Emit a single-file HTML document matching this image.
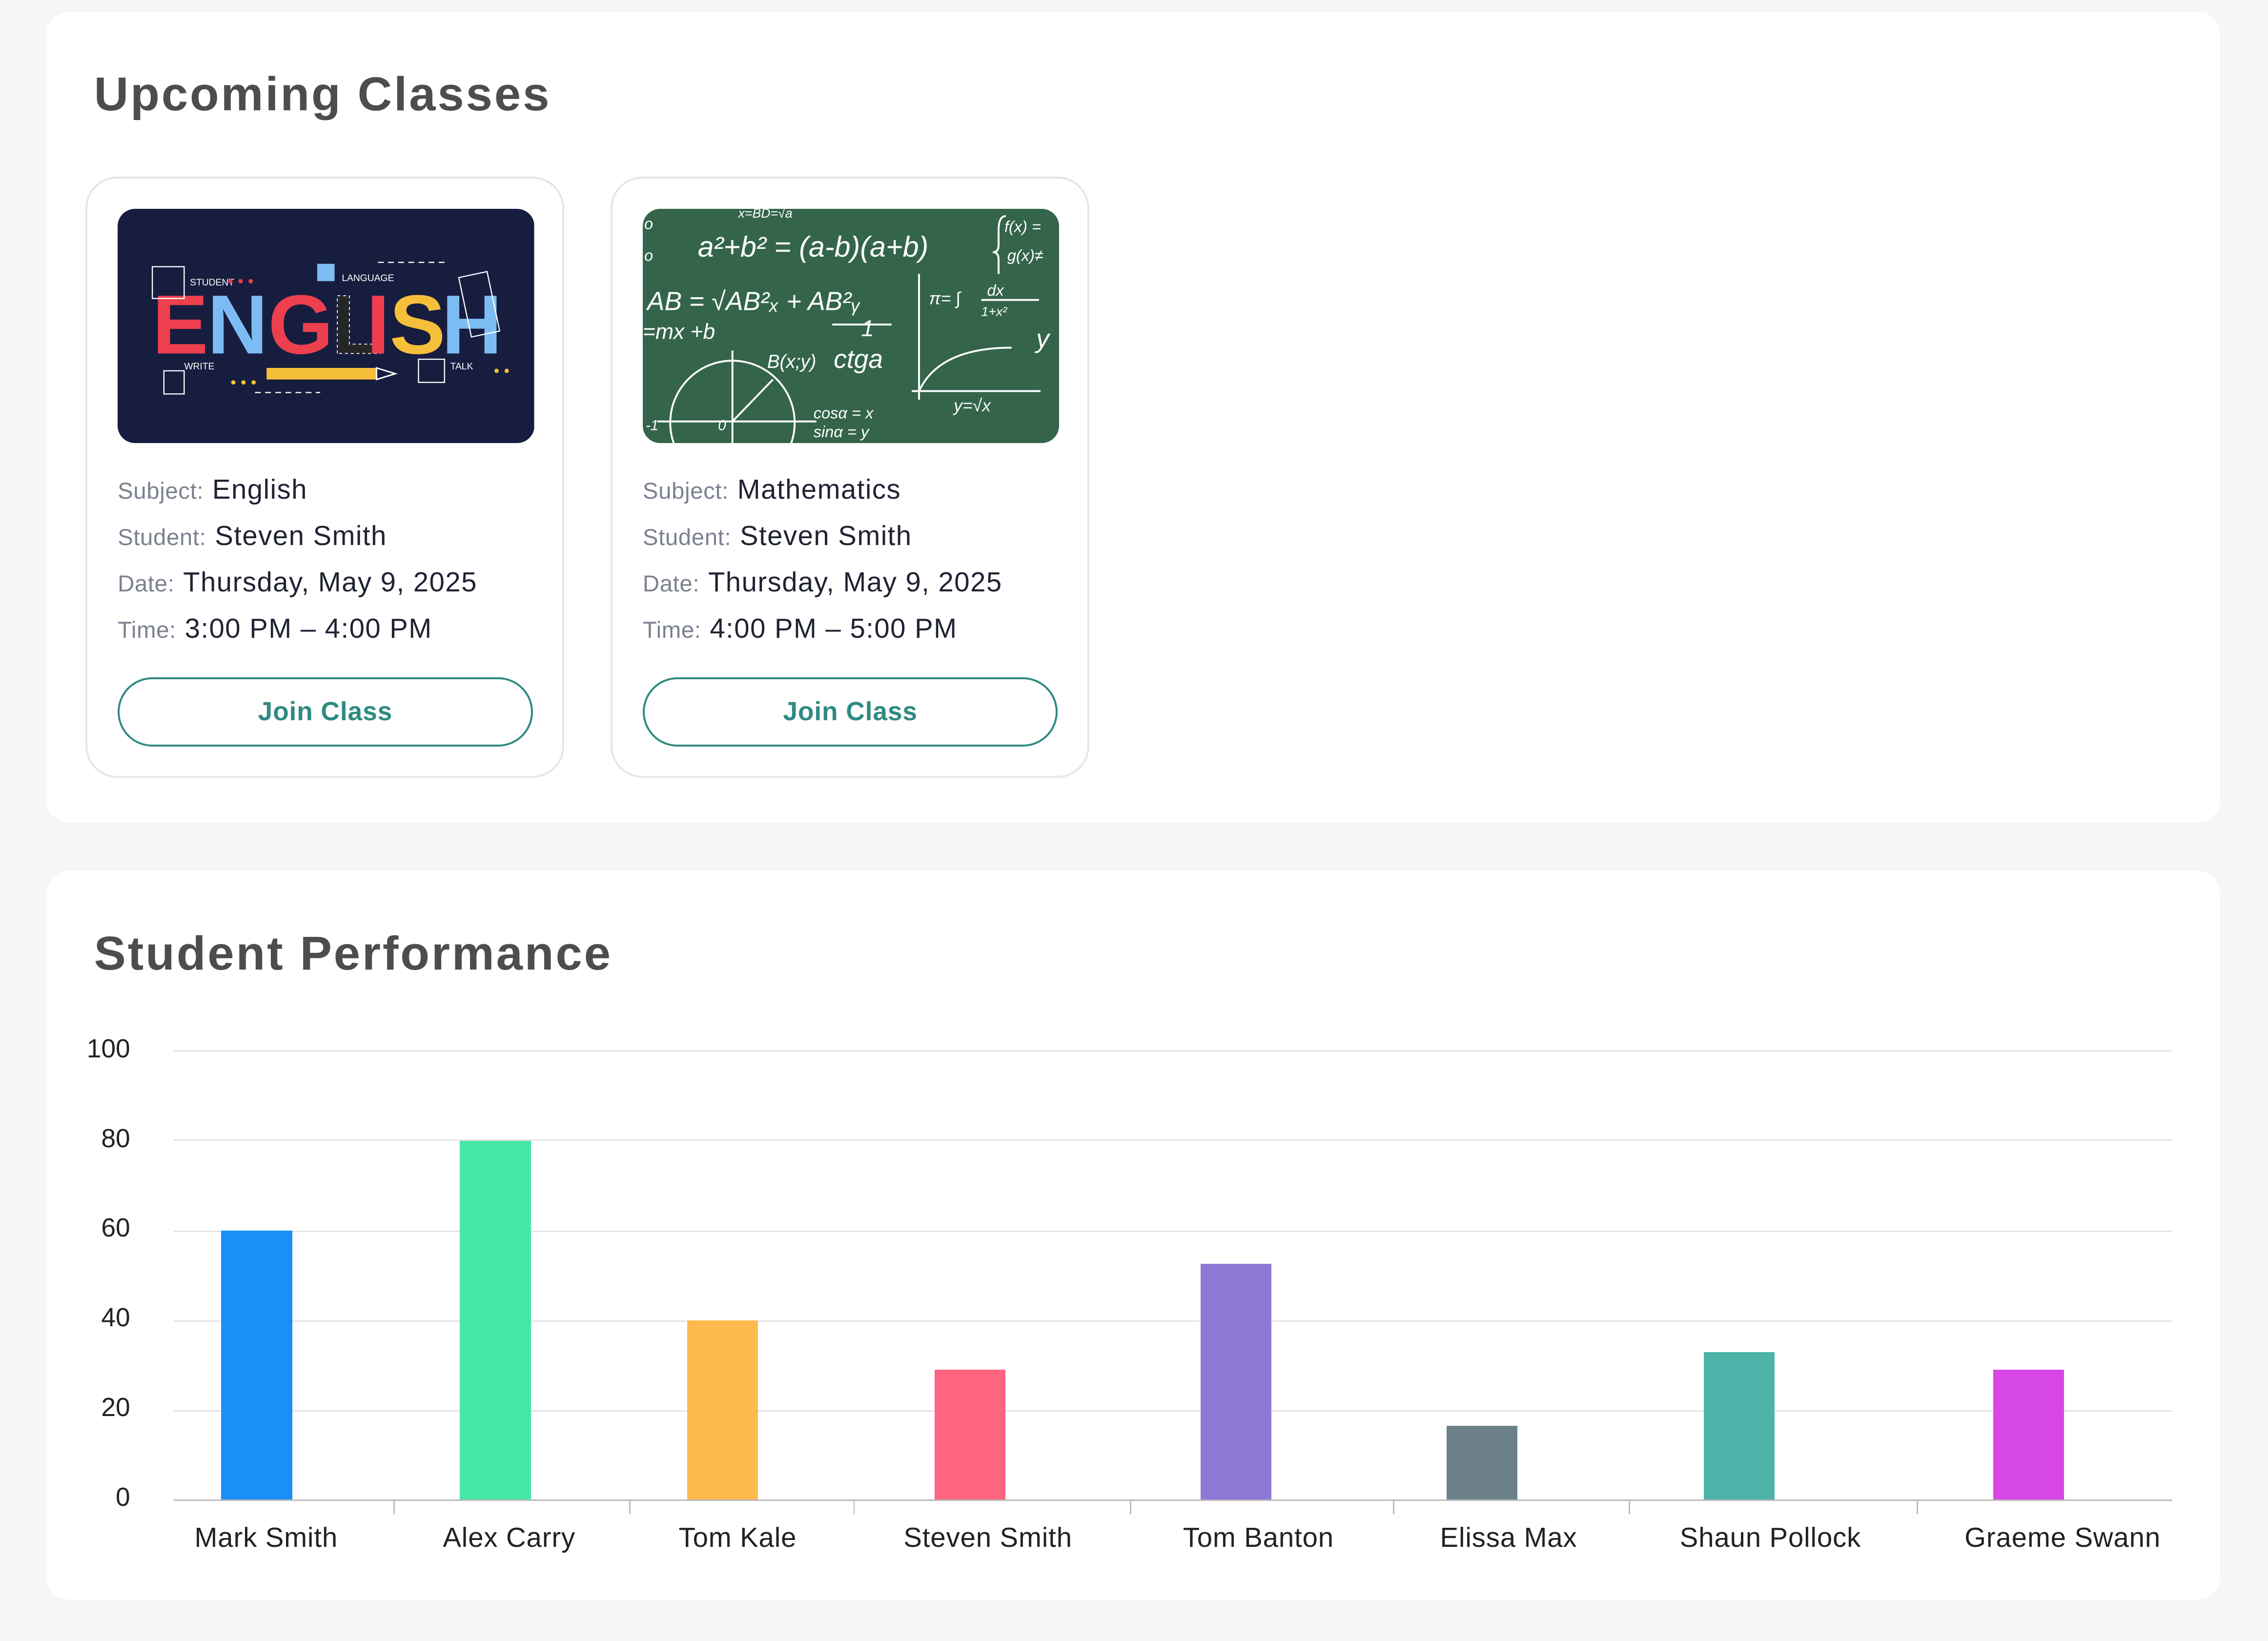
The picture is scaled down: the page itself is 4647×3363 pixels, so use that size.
<!DOCTYPE html>
<html><head><meta charset="utf-8">
<style>
*{margin:0;padding:0;box-sizing:border-box}
html,body{width:4647px;height:3363px;overflow:hidden;background:#f6f6f6}
#root{zoom:2.96365;width:1568px;height:1135px;position:relative;font-family:"Liberation Sans",sans-serif;background:#f6f6f6}
.panel{position:absolute;left:32px;width:1503px;background:#fff;border-radius:16px}
.title{position:absolute;left:33px;font-size:33px;font-weight:bold;color:#4d4d4d;letter-spacing:1.3px}
.card{position:absolute;top:114px;width:331px;height:416px;border:1.5px solid #e6e6e6;border-radius:22px;background:#fff}
.img{position:absolute;left:21px;top:21px;width:288px;height:162px;border-radius:12px;overflow:hidden}
.row{position:absolute;left:21px;font-size:19px;color:#1f2333;white-space:nowrap;letter-spacing:0.5px}
.row span{font-size:16px;color:#7b8190;margin-right:6px;letter-spacing:0.2px}
.btn{position:absolute;left:21px;top:345px;width:287px;height:48px;border:1.5px solid #2f8a82;border-radius:24px;text-align:center;line-height:45px;color:#2f8a82;font-weight:bold;font-size:18px;letter-spacing:0.3px}
.yl{position:absolute;width:60px;left:-2px;text-align:right;font-size:18px;color:#222}
.grid{position:absolute;left:88px;width:1382px;height:1px;background:#e3e3e3}
.bar{position:absolute;width:49px}
.xl{position:absolute;top:450px;font-size:19px;color:#222;width:200px;text-align:center;letter-spacing:0.3px}
.tick{position:absolute;top:435px;width:1px;height:10px;background:#bbb}
</style></head><body><div id="root">

<div class="panel" style="top:8px;height:561px">
  <div class="title" style="top:38px">Upcoming Classes</div>

  <div class="card" style="left:27px">
    <div class="img">
      <svg width="288" height="162" viewBox="0 0 288 162">
        <rect width="288" height="162" fill="#171d3f"/>
        <g font-family="Liberation Sans" font-weight="bold" font-size="58">
          <text x="24" y="100" fill="#ee3f4f">E</text>
          <text x="62" y="100" fill="#7dbcf3">N</text>
          <text x="104" y="100" fill="#ee3f4f">G</text>
          <text x="148" y="100" fill="#262626" stroke="#fff" stroke-width="0.6" stroke-dasharray="2 2">L</text>
          <text x="172" y="100" fill="#ee3f4f">I</text>
          <text x="188" y="100" fill="#f5bf3a">S</text>
          <text x="224" y="100" fill="#7dbcf3">H</text>
        </g>
        <g fill="#fff" font-family="Liberation Sans" font-size="6.5">
          <text x="50" y="53">STUDENT</text><text x="155" y="50">LANGUAGE</text>
          <text x="46" y="111">WRITE</text><text x="230" y="111">TALK</text>
        </g>
        <rect x="103" y="110" width="76" height="8" fill="#f5bf3a"/>
        <polygon points="179,110 192,114 179,118" fill="none" stroke="#fff"/>
        <g fill="#ee3f4f"><circle cx="78" cy="50" r="1.5"/><circle cx="85" cy="50" r="1.5"/><circle cx="92" cy="50" r="1.5"/></g>
        <g fill="#f5bf3a"><circle cx="80" cy="120" r="1.5"/><circle cx="87" cy="120" r="1.5"/><circle cx="94" cy="120" r="1.5"/><circle cx="262" cy="112" r="1.5"/><circle cx="269" cy="112" r="1.5"/></g>
        <rect x="138" y="38" width="12" height="12" fill="#7dbcf3"/>
        <g stroke="#fff" fill="none" stroke-width="0.8"><rect x="24" y="40" width="22" height="22"/><rect x="240" y="45" width="20" height="42" transform="rotate(-12 250 66)"/><rect x="208" y="104" width="18" height="16"/><rect x="32" y="112" width="14" height="16"/></g>
        <g stroke="#fff" stroke-dasharray="4 3" stroke-width="0.8"><line x1="180" y1="37" x2="226" y2="37"/><line x1="95" y1="127" x2="140" y2="127"/></g>
      </svg>
    </div>
    <div class="row" style="top:204px"><span>Subject:</span>English</div>
    <div class="row" style="top:236px"><span>Student:</span>Steven Smith</div>
    <div class="row" style="top:268px"><span>Date:</span>Thursday, May 9, 2025</div>
    <div class="row" style="top:300px"><span>Time:</span>3:00 PM – 4:00 PM</div>
    <div class="btn">Join Class</div>
  </div>

  <div class="card" style="left:390px">
    <div class="img">
      <svg width="288" height="162" viewBox="0 0 288 162">
        <rect width="288" height="162" fill="#34654b"/>
        <g fill="#fff" font-family="Liberation Sans" font-style="italic">
          <text x="38" y="33" font-size="20">a²+b² = (a-b)(a+b)</text>
          <text x="66" y="6" font-size="9">x=BD=√a</text>
          <text x="250" y="16" font-size="11">f(x) =</text>
          <text x="252" y="36" font-size="11">g(x)≠</text>
          <text x="3" y="70" font-size="18">AB = √AB²ₓ + AB²ᵧ</text>
          <text x="0" y="90" font-size="15">=mx +b</text>
          <text x="86" y="110" font-size="13">B(x;y)</text>
          <text x="151" y="88" font-size="16">1</text>
          <text x="132" y="110" font-size="18">ctga</text>
          <text x="198" y="66" font-size="12">π= ∫</text>
          <text x="238" y="60" font-size="11">dx</text>
          <text x="234" y="74" font-size="9">1+x²</text>
          <text x="272" y="96" font-size="18">y</text>
          <text x="215" y="140" font-size="12">y=√x</text>
          <text x="118" y="145" font-size="11">cosα = x</text>
          <text x="118" y="158" font-size="11">sinα = y</text>
          <text x="1" y="14" font-size="11">o</text><text x="1" y="36" font-size="11">o</text>
          <text x="2" y="153" font-size="10">-1</text><text x="52" y="153" font-size="10">0</text>
        </g>
        <g stroke="#fff" fill="none" stroke-width="1.3">
          <circle cx="62" cy="148" r="43"/>
          <line x1="10" y1="147" x2="120" y2="147"/>
          <line x1="62" y1="98" x2="62" y2="162"/>
          <line x1="62" y1="147" x2="90" y2="118"/>
          <line x1="131" y1="80" x2="172" y2="80"/>
          <line x1="191" y1="45" x2="191" y2="132"/>
          <line x1="186" y1="126" x2="275" y2="126"/>
          <path d="M191 126 Q205 96 255 96"/>
          <line x1="234" y1="63" x2="274" y2="63"/>
          <path d="M251 5 Q246 5 246 15 L246 25 Q246 30 242 30 Q246 30 246 35 L246 45"/>
        </g>
      </svg>
    </div>
    <div class="row" style="top:204px"><span>Subject:</span>Mathematics</div>
    <div class="row" style="top:236px"><span>Student:</span>Steven Smith</div>
    <div class="row" style="top:268px"><span>Date:</span>Thursday, May 9, 2025</div>
    <div class="row" style="top:300px"><span>Time:</span>4:00 PM – 5:00 PM</div>
    <div class="btn">Join Class</div>
  </div>
</div>

<div class="panel" style="top:602px;height:504px">
  <div class="title" style="top:38px">Student Performance</div>
  <div class="yl" style="top:113px">100</div>
  <div class="yl" style="top:175px">80</div>
  <div class="yl" style="top:237px">60</div>
  <div class="yl" style="top:299px">40</div>
  <div class="yl" style="top:361px">20</div>
  <div class="yl" style="top:423px">0</div>
  <div class="grid" style="top:124px"></div>
  <div class="grid" style="top:186px"></div>
  <div class="grid" style="top:249px"></div>
  <div class="grid" style="top:311px"></div>
  <div class="grid" style="top:373px"></div>
  <div class="grid" style="top:435px;background:#bbb"></div>

  <div class="bar" style="left:121px;top:249px;height:186px;background:#1a90f7"></div>
  <div class="bar" style="left:286px;top:187px;height:248px;background:#46e6a6"></div>
  <div class="bar" style="left:443px;top:311px;height:124px;background:#feb94f"></div>
  <div class="bar" style="left:614px;top:345px;height:90px;background:#ff6480"></div>
  <div class="bar" style="left:798px;top:272px;height:163px;background:#8e78d6"></div>
  <div class="bar" style="left:968px;top:384px;height:51px;background:#6c8189"></div>
  <div class="bar" style="left:1146px;top:333px;height:102px;background:#4db3a8"></div>
  <div class="bar" style="left:1346px;top:345px;height:90px;background:#d746e6"></div>

  <div class="tick" style="left:240px"></div>
  <div class="tick" style="left:403px"></div>
  <div class="tick" style="left:558px"></div>
  <div class="tick" style="left:749px"></div>
  <div class="tick" style="left:931px"></div>
  <div class="tick" style="left:1094px"></div>
  <div class="tick" style="left:1293px"></div>

  <div class="xl" style="left:52px">Mark Smith</div>
  <div class="xl" style="left:220px">Alex Carry</div>
  <div class="xl" style="left:378px">Tom Kale</div>
  <div class="xl" style="left:551px">Steven Smith</div>
  <div class="xl" style="left:738px">Tom Banton</div>
  <div class="xl" style="left:911px">Elissa Max</div>
  <div class="xl" style="left:1092px">Shaun Pollock</div>
  <div class="xl" style="left:1294px">Graeme Swann</div>
</div>

</div></body></html>
